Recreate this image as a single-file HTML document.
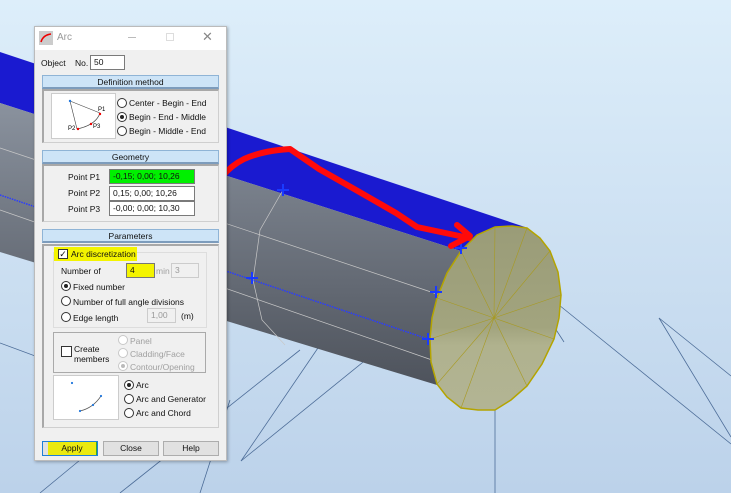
<!DOCTYPE html>
<html><head><meta charset="utf-8"><style>
*{margin:0;padding:0;box-sizing:border-box}
body{width:731px;height:493px;overflow:hidden;position:relative;font-family:"Liberation Sans",sans-serif;font-size:8.5px;color:#111;background:linear-gradient(#ddeefa,#bcd2ea)}
.a{position:absolute;white-space:nowrap}
.hdr{position:absolute;left:42px;width:177px;height:14px;background:#cde4f7;border:1px solid #8fb4d6;border-bottom:2px solid #7d9cbc;text-align:center;line-height:12px;font-size:8.5px}
.grp{position:absolute;border:1px solid #cfcfcf;border-left:2px solid #a8a8a8;border-top:2px solid #a8a8a8}
.in{position:absolute;background:#fff;border:1px solid #7a7a7a;height:15px;line-height:13px;padding-left:3px}
.rd{position:absolute;width:10px;height:10px;border-radius:50%;border:1px solid #333;background:#fff}
.rd.on::after{content:"";position:absolute;left:2px;top:2px;width:4px;height:4px;border-radius:50%;background:#222}
.rd.dis{border-color:#c8c8c8}
.rd.dis.on::after{background:#bbb}
.btn{position:absolute;top:441px;height:15px;width:56px;background:#e1e1e1;border:1px solid #adadad;text-align:center;line-height:13px}
.dim{color:#a0a0a0}
</style></head><body>
<svg class="a" style="left:0;top:0" width="731" height="493">
<g stroke="#4d6d98" stroke-width="0.8" fill="none">
<line x1="0" y1="343" x2="100" y2="380"/>
<line x1="241" y1="461" x2="337" y2="320"/>
<line x1="241" y1="461" x2="473" y2="273"/>
<line x1="120" y1="493" x2="300" y2="350"/>
<line x1="40" y1="493" x2="80" y2="460"/>
<line x1="518" y1="271" x2="564" y2="342"/>
<line x1="559" y1="305" x2="731" y2="444"/>
<line x1="659" y1="318" x2="731" y2="437"/>
<line x1="659" y1="318" x2="731" y2="376"/>
<line x1="495" y1="318" x2="495" y2="493"/>
<line x1="230" y1="400" x2="200" y2="493"/>
</g>
<defs><linearGradient id="g" x1="0" y1="0" x2="0" y2="1"><stop offset="0" stop-color="#8a929e"/><stop offset="1" stop-color="#4e535c"/></linearGradient>
<linearGradient id="c" x1="0" y1="0" x2="0" y2="1"><stop offset="0" stop-color="#9a9c78"/><stop offset="0.55" stop-color="#a2a47e"/><stop offset="0.65" stop-color="#b0b28e"/><stop offset="1" stop-color="#b2b494"/></linearGradient></defs>
<polygon points="0,52 525,227 461,251 0,103" fill="#1a1ad0"/>
<polygon points="0,103 461,251 437,298 430,339 437,385 0,252" fill="url(#g)"/>
<g stroke="#c8c8c8" stroke-width="0.7" fill="none">
<line x1="0" y1="148" x2="440" y2="295"/>
<line x1="0" y1="210" x2="432" y2="360"/>
<polyline points="283,190 260,230 253,280 262,320 285,345"/>
</g>
<line x1="0" y1="195" x2="428" y2="339" stroke="#2a3cff" stroke-width="1.5" stroke-dasharray="1.5,1"/>
<polygon points="495,227 512,226 527,228 540,238 550,251 558,272 561,295 559,318 554,339 542,364 527,386 511,400 495,410 478,410 461,408 447,397 437,384 431,362 430,339 432,318 437,298 447,273 461,251 477,235" fill="url(#c)" stroke="#b4a400" stroke-width="1.5"/>
<g stroke="#a89a20" stroke-width="0.6">
<line x1="494" y1="318" x2="495" y2="227"/><line x1="494" y1="318" x2="527" y2="228"/><line x1="494" y1="318" x2="550" y2="251"/><line x1="494" y1="318" x2="561" y2="295"/><line x1="494" y1="318" x2="554" y2="339"/><line x1="494" y1="318" x2="527" y2="386"/><line x1="494" y1="318" x2="461" y2="408"/><line x1="494" y1="318" x2="437" y2="384"/><line x1="494" y1="318" x2="430" y2="339"/><line x1="494" y1="318" x2="437" y2="298"/><line x1="494" y1="318" x2="461" y2="251"/>
</g>
<g stroke="#1a3aff" stroke-width="2">
<path d="M277 190h12M283 184v12M246 278h12M252 272v12M455 248h12M461 242v12M430 292h12M436 286v12M422 339h12M428 333v12"/>
</g>
<path d="M207 205 C212 190 222 170 244 159 C260 152 275 150 290 149 L319 169 L356 190 L396 213 L417 227 L469 238" stroke="#ff0a0a" stroke-width="6" fill="none" stroke-linecap="round" stroke-linejoin="round"/>
<path d="M457 225 L470 236 L451 246" stroke="#ff0a0a" stroke-width="6" fill="none" stroke-linecap="round" stroke-linejoin="round"/>
</svg>

<div class="a" style="left:34px;top:26px;width:193px;height:435px;background:#f0f0f0;border:1px solid #bbb;box-shadow:1px 1px 3px rgba(0,0,0,.3)"></div>
<div class="a" style="left:35px;top:27px;width:191px;height:23px;background:#fff"></div>
<svg class="a" style="left:39px;top:31px" width="14" height="14"><rect width="14" height="14" fill="#ccc"/><path d="M2 11 Q4 4 12 3" stroke="#e00" stroke-width="1.6" fill="none"/></svg>
<div class="a" style="left:57px;top:32px;font-size:10px;color:#999">Arc</div>
<div class="a" style="left:128px;top:37px;width:8px;height:1px;background:#bbb"></div>
<div class="a" style="left:166px;top:33px;width:8px;height:8px;border:1px solid #ddd"></div>
<div class="a" style="left:202px;top:29px;font-size:13px;color:#888">✕</div>

<div class="a" style="left:41px;top:58px">Object</div>
<div class="a" style="left:75px;top:58px">No.</div>
<div class="in" style="left:90px;top:55px;width:35px">50</div>

<div class="hdr" style="top:75px">Definition method</div>
<div class="grp" style="left:42px;top:89px;width:177px;height:54px"></div>
<div class="a" style="left:51px;top:93px;width:65px;height:46px;background:#fff;border:1px solid #ccc"></div>
<svg class="a" style="left:51px;top:93px" width="65" height="46"><path d="M19 8 L49 20 M19 8 L26 36" stroke="#444" stroke-width=".6"/><path d="M49 20 Q45 32 26 36" stroke="#444" stroke-width=".7" fill="none"/><circle cx="19" cy="8" r="1.2" fill="#27d"/><circle cx="49" cy="21" r="1.2" fill="#e00"/><circle cx="40" cy="31" r="1.2" fill="#e00"/><circle cx="27" cy="36" r="1.2" fill="#e00"/><text x="47" y="18" font-size="6" font-family="Liberation Sans">P1</text><text x="42" y="35" font-size="6" font-family="Liberation Sans">P3</text><text x="17" y="37" font-size="6" font-family="Liberation Sans">P2</text></svg>
<div class="rd" style="left:117px;top:98px"></div><div class="a" style="left:129px;top:98px">Center - Begin - End</div>
<div class="rd on" style="left:117px;top:112px"></div><div class="a" style="left:129px;top:112px">Begin - End - Middle</div>
<div class="rd" style="left:117px;top:126px"></div><div class="a" style="left:129px;top:126px">Begin - Middle - End</div>

<div class="hdr" style="top:150px">Geometry</div>
<div class="grp" style="left:42px;top:164px;width:177px;height:58px"></div>
<div class="a" style="left:68px;top:172px">Point P1</div>
<div class="a" style="left:68px;top:188px">Point P2</div>
<div class="a" style="left:68px;top:204px">Point P3</div>
<div class="in" style="left:109px;top:169px;width:86px;background:#00f000">-0,15; 0,00; 10,26</div>
<div class="in" style="left:109px;top:186px;width:86px">0,15; 0,00; 10,26</div>
<div class="in" style="left:109px;top:201px;width:86px">-0,00; 0,00; 10,30</div>

<div class="hdr" style="top:229px">Parameters</div>
<div class="grp" style="left:42px;top:244px;width:177px;height:184px"></div>
<div class="a" style="left:53px;top:252px;width:154px;height:76px;border:1px solid #ddd"></div>
<div class="a" style="left:54px;top:247px;width:83px;height:14px;background:#f4f400"></div>
<div class="a" style="left:58px;top:249px;width:10px;height:10px;border:1px solid #333;background:#fff;font-size:9px;line-height:8px;text-align:center">✓</div>
<div class="a" style="left:71px;top:249px">Arc discretization</div>
<div class="a" style="left:61px;top:266px">Number of</div>
<div class="a" style="left:126px;top:263px;width:29px;height:15px;background:#f4f400;border:1px solid #777;padding-left:3px;line-height:13px">4</div>
<div class="a dim" style="left:156px;top:266px">min</div>
<div class="in" style="left:171px;top:263px;width:28px;border-color:#ccc;background:#f0f0f0;color:#999">3</div>
<div class="rd on" style="left:61px;top:281px"></div><div class="a" style="left:73px;top:282px">Fixed number</div>
<div class="rd" style="left:61px;top:296px"></div><div class="a" style="left:73px;top:297px">Number of full angle divisions</div>
<div class="rd" style="left:61px;top:312px"></div><div class="a" style="left:73px;top:313px">Edge length</div>
<div class="in" style="left:147px;top:308px;width:29px;border-color:#ccc;background:#f0f0f0;color:#999">1,00</div>
<div class="a" style="left:181px;top:311px">(m)</div>

<div class="a" style="left:53px;top:332px;width:153px;height:41px;border:1px solid #aaa"></div>
<div class="a" style="left:61px;top:346px;width:11px;height:11px;border:1px solid #333;background:#fff"></div>
<div class="a" style="left:74px;top:344px;line-height:10px">Create<br>members</div>
<div class="rd dis" style="left:118px;top:335px"></div><div class="a dim" style="left:130px;top:336px">Panel</div>
<div class="rd dis" style="left:118px;top:348px"></div><div class="a dim" style="left:130px;top:349px">Cladding/Face</div>
<div class="rd dis on" style="left:118px;top:361px"></div><div class="a dim" style="left:130px;top:362px">Contour/Opening</div>

<div class="a" style="left:53px;top:375px;width:66px;height:45px;background:#fff;border:1px solid #ccc"></div>
<svg class="a" style="left:53px;top:375px" width="66" height="45"><path d="M27 36 Q40 33 48 21" stroke="#555" stroke-width=".7" fill="none"/><circle cx="19" cy="8" r="1.1" fill="#27d"/><circle cx="48" cy="21" r="1.1" fill="#27d"/><circle cx="40" cy="30" r="1.1" fill="#27d"/><circle cx="27" cy="36" r="1.1" fill="#27d"/></svg>
<div class="rd on" style="left:124px;top:380px"></div><div class="a" style="left:136px;top:380px">Arc</div>
<div class="rd" style="left:124px;top:394px"></div><div class="a" style="left:136px;top:394px">Arc and Generator</div>
<div class="rd" style="left:124px;top:408px"></div><div class="a" style="left:136px;top:408px">Arc and Chord</div>

<div class="btn" style="left:42px;border:1px solid #1e7fd8"></div>
<div class="a" style="left:48px;top:442px;width:49px;height:13px;background:#eaea10;text-align:center;line-height:13px;border-right:1px solid #3a3">Apply</div>
<div class="btn" style="left:103px">Close</div>
<div class="btn" style="left:163px">Help</div>
</body></html>
